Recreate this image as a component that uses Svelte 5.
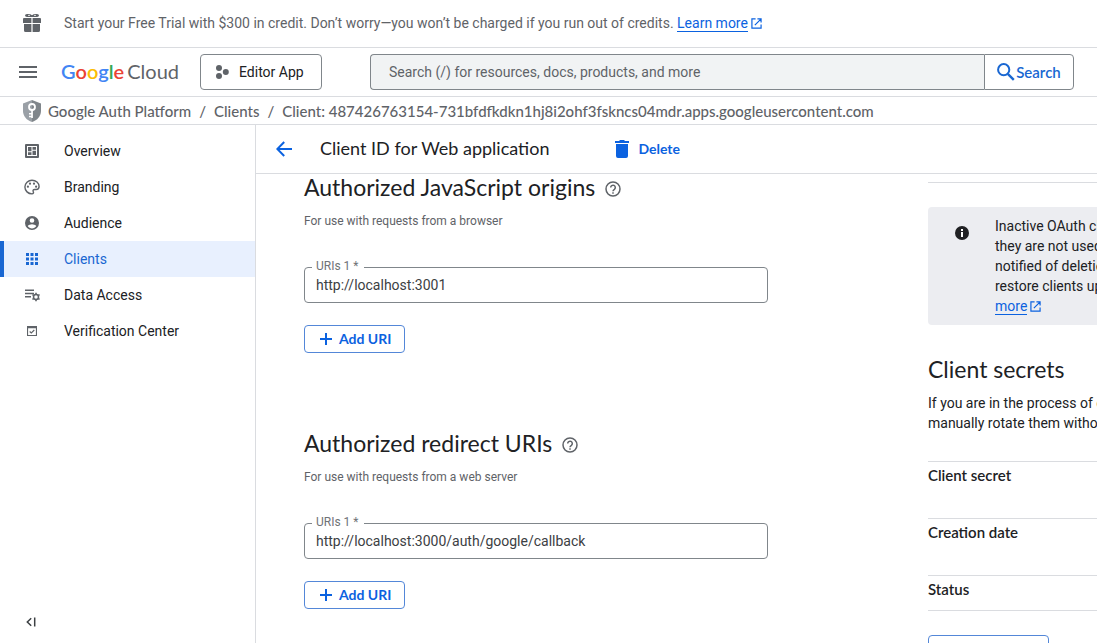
<script lang="ts">
  const nav = [
    { label: 'Overview', icon: 'overview' },
    { label: 'Branding', icon: 'palette' },
    { label: 'Audience', icon: 'person' },
    { label: 'Clients', icon: 'apps', active: true },
    { label: 'Data Access', icon: 'data' },
    { label: 'Verification Center', icon: 'verify' }
  ];
  const crumbs = [
    'Google Auth Platform',
    'Clients',
    'Client: 487426763154-731bfdfkdkn1hj8i2ohf3fskncs04mdr.apps.googleusercontent.com'
  ];
  const sections = $state([
    { id: 'origins', title: 'Authorized JavaScript origins', hint: 'For use with requests from a browser', uri: 'http://localhost:3001' },
    { id: 'redirects', title: 'Authorized redirect URIs', hint: 'For use with requests from a web server', uri: 'http://localhost:3000/auth/google/callback' }
  ]);
  const fields = ['Client secret', 'Creation date', 'Status'];
</script>

{#snippet external()}
  <svg class="external" width="11" height="11" viewBox="0 0 12 12" fill="none" stroke="currentColor" stroke-width="1.3" aria-hidden="true">
    <path d="M5 1H1v10h10V7M7 1h4v4M10.800 1.200 4.200 7.800" />
  </svg>
{/snippet}

{#snippet plus()}
  <svg width="12" height="12" viewBox="0 0 12 12" fill="none" stroke="currentColor" stroke-width="2" aria-hidden="true">
    <path d="M6 0v12M0 6h12" />
  </svg>
{/snippet}

<div class="page">
  <div class="banner">
    <svg width="18" height="18" viewBox="0 0 18 18" fill="#5f6368" aria-hidden="true">
      <path d="M2 1.600Q2 0 4 0h1.500Q7.500 0 9 1.200 10.500 0 12.500 0H14q2 0 2 1.600Q16 3 14 3H4Q2 3 2 1.600zM1 4h7.400v5H0V5q0-1 1-1zm8.600 0H17q1 0 1 1v4H9.600zM1 10h7.400v8H2.500Q1 18 1 16.500zm8.600 0H17v6.500q0 1.500-1.500 1.500H9.600z" />
      <path d="M5 1.400h2M11 1.400h2" stroke="#fff" stroke-width=".8" />
    </svg>
    <p>Start your Free Trial with $300 in credit. Don’t worry—you won’t be charged if you run out of credits. <a class="link" href="#trial"><span>Learn more</span>{@render external()}</a></p>
  </div>

  <header>
    <button class="plain menu" aria-label="Main menu">
      <svg width="18" height="12" viewBox="0 0 18 12" fill="#5f6368" aria-hidden="true"><path d="M0 0h18v2H0zM0 5h18v2H0zM0 10h18v2H0z" /></svg>
    </button>
    <a class="logo" href="#home"><span class="google"><i class="b">G</i><i class="r">o</i><i class="y">o</i><i class="b">g</i><i class="g">l</i><i class="r">e</i></span><span>Cloud</span></a>
    <button class="project">
      <svg width="14" height="14" viewBox="0 0 14 14" fill="#5f6368" aria-hidden="true"><circle cx="4" cy="3.100" r="3" /><circle cx="10.800" cy="7" r="3" /><circle cx="4" cy="10.900" r="3" /></svg>
      Editor App
    </button>
    <form class="search">
      <input type="search" aria-label="Search" placeholder="Search (/) for resources, docs, products, and more" />
      <button type="button">
        <svg width="18" height="18" viewBox="0 0 18 18" fill="none" stroke="currentColor" aria-hidden="true"><circle cx="6.700" cy="6.700" r="5.600" stroke-width="2" /><path d="m10.800 10.800 6 6" stroke-width="2.400" /></svg>
        Search
      </button>
    </form>
  </header>

  <nav class="crumbs" aria-label="Breadcrumb">
    <svg width="18" height="22" viewBox="0 0 18 22" aria-hidden="true">
      <path d="M9 0 0 3.500V11c0 5 3.700 9.500 9 11z" fill="#9aa0a6" />
      <path d="m9 0 9 3.500V11c0 5-3.700 9.500-9 11z" fill="#80868b" />
      <circle cx="9" cy="7" r="3" fill="none" stroke="#fff" stroke-width="1.800" />
      <path d="M8.200 10h1.700v8H8.200zM6 13h3v1.500H6zM6 15.800h3v1.500H6z" fill="#fff" />
    </svg>
    {#each crumbs as crumb, i}
      {#if i > 0}<span class="slash">/</span>{/if}
      <a href="#crumb-{i}">{crumb}</a>
    {/each}
  </nav>

  <div class="body">
    <aside>
      <nav aria-label="Google Auth Platform">
        {#each nav as item}
          <a class="item" class:active={item.active} href="#{item.icon}">
            <svg width="16" height="16" viewBox="0 0 16 16" fill="currentColor" aria-hidden="true">
              {#if item.icon === 'overview'}
                <path fill-rule="evenodd" d="M2 1h12q1 0 1 1v12q0 1-1 1H2q-1 0-1-1V2q0-1 1-1zm1 2v10h10V3z" />
                <path d="M4 4h3.500v4.300H4zM4 9.300h3.500V12H4zM8.500 4H12v2.700H8.500zM8.500 7.700H12V12H8.500z" />
              {:else if item.icon === 'palette'}
                <path d="M8 1.200C4.100 1.200.9 4.200.9 8s3.200 6.900 7.100 6.900c1.300 0 1.900-1.100 1.300-2.100-.700-1.200 0-2.300 1.200-2.300h1.700c1.700 0 2.900-1.200 2.900-2.900 0-3.700-3.200-6.400-7.100-6.400z" fill="none" stroke="currentColor" stroke-width="1.400" />
                <circle cx="3.900" cy="7.700" r="1.100" /><circle cx="6" cy="4.700" r="1.100" /><circle cx="10" cy="4.700" r="1.100" /><circle cx="12.100" cy="7.700" r="1.100" />
              {:else if item.icon === 'person'}
                <path fill-rule="evenodd" d="M8 1a7 7 0 1 0 0 14A7 7 0 0 0 8 1zm0 2.200a2.300 2.300 0 1 1 0 4.600 2.300 2.300 0 0 1 0-4.600zM3.700 11.100C4.500 9.900 6.500 9.200 8 9.200s3.500.700 4.300 1.900a5.100 5.100 0 0 1-8.600 0z" />
              {:else if item.icon === 'apps'}
                <path d="M2 2h3v3H2zM6.500 2h3v3h-3zM11 2h3v3h-3zM2 6.500h3v3H2zM6.500 6.500h3v3h-3zM11 6.500h3v3h-3zM2 11h3v3H2zM6.500 11h3v3h-3zM11 11h3v3h-3z" />
              {:else if item.icon === 'data'}
                <path d="M1 2.500h9V4H1zM1 5.800h9v1.400H1zM1 9h6v1.500H1z" />
                <circle cx="12" cy="10" r="2.500" fill="none" stroke="currentColor" stroke-width="1.500" />
                <path d="M11.200 5.800h1.600v1.500h-1.600zM11.200 12.700h1.600v1.500h-1.600zM8 8.200l.8-1.300 1.300.8-.8 1.300zM13.900 12.300l.8-1.300 1.300.8-.8 1.300zM8 11.800l.8 1.300 1.300-.8-.8-1.300zM13.900 7.700l.8 1.300 1.300-.8-.8-1.300z" />
              {:else}
                <path fill-rule="evenodd" d="M3 3h10v10H3zm1.100 2.200v6.700h7.800V5.200z" />
                <path d="m5.700 8.500 1.600 1.500 3-3" fill="none" stroke="currentColor" stroke-width="1.100" />
              {/if}
            </svg>
            {item.label}
          </a>
        {/each}
      </nav>
      <button class="plain collapse" aria-label="Collapse navigation">
        <svg width="10" height="10" viewBox="0 0 10 10" fill="none" stroke="#3c4043" stroke-width="1.500" aria-hidden="true"><path d="M5.200 1.200 1.300 5l3.900 3.800M8.700.5v9" /></svg>
      </button>
    </aside>

    <main>
      <div class="toolbar">
        <button class="plain back" aria-label="Back">
          <svg width="16" height="16" viewBox="0 0 16 16" fill="none" stroke="currentColor" stroke-width="2" aria-hidden="true"><path d="M16 8H1.500M8.200 1 1.300 8l6.900 7" /></svg>
        </button>
        <h1>Client ID for Web application</h1>
        <button class="plain delete">
          <svg width="14" height="18" viewBox="0 0 14 18" fill="currentColor" aria-hidden="true"><path d="M0 1h4l1-1h4l1 1h4v2H0zM1 4h12v12q0 2-2 2H3q-2 0-2-2z" /></svg>
          Delete
        </button>
      </div>

      <div class="content">
        <div class="left">
          {#each sections as s}
            <section>
              <h2>{s.title}
                <svg width="16" height="16" viewBox="0 0 16 16" fill="none" stroke="#5f6368" stroke-width="1.500" role="img" aria-label="Help"><circle cx="8" cy="8" r="7" /><path d="M5.700 6.500a2.300 2.300 0 1 1 3.700 1.800C8.500 8.900 8 9.300 8 10.200" /><path d="M8 11.200v1.500" /></svg>
              </h2>
              <p class="hint">{s.hint}</p>
              <div class="field">
                <label for={s.id}>URIs 1 *</label>
                <input id={s.id} type="text" bind:value={s.uri} />
              </div>
              <button class="outlined">{@render plus()}Add URI</button>
            </section>
          {/each}
        </div>

        <div class="right">
          <hr />
          <div class="notice">
            <svg width="14" height="14" viewBox="0 0 14 14" aria-hidden="true"><circle cx="7" cy="7" r="7" fill="#202124" /><path d="M6 3h2v2H6zM6 6h2v5H6z" fill="#fff" /></svg>
            <p>Inactive OAuth clients are subject to deletion if<br />they are not used for six months. You will be<br />notified of deletion by email and you can<br />restore clients up to 30 days after deletion.<br /><a class="link" href="#inactive"><span>more</span>{@render external()}</a></p>
          </div>
          <h2>Client secrets</h2>
          <p class="about">If you are in the process of changing client secrets, you can<br />manually rotate them without downtime.</p>
          <dl>
            {#each fields as f}<dt>{f}</dt>{/each}
          </dl>
          <button class="outlined secret">{@render plus()}Add secret</button>
        </div>
      </div>
    </main>
  </div>
</div>

<style>
  :global(body) { margin: 0; background: #fff; }
  .page {
    --sans: Roboto, sans-serif;
    --display: Lato, sans-serif;
    --line: #dadce0;
    display: flex; flex-direction: column; height: 100vh; overflow: hidden;
    font: 14px/20px var(--sans); color: #202124;
  }
  * { box-sizing: border-box; }
  p, h1, h2, dl { margin: 0; }
  button, input { font: inherit; }
  button { cursor: pointer; background: #fff; color: inherit; }
  a { color: inherit; text-decoration: none; }
  svg { flex: none; }
  .plain { border: 0; padding: 0; background: none; display: flex; align-items: center; }

  .banner { display: flex; align-items: center; gap: 23px; height: 48px; flex: none; padding: 0 23px 2px; border-bottom: 1px solid var(--line); color: #5f6368; white-space: nowrap; }
  .link { color: #0b62e0; }
  .link span { border-bottom: 1px solid currentColor; }
  .external { margin-left: 3px; vertical-align: -1px; }

  header { display: flex; align-items: center; height: 49px; flex: none; padding: 0 23px 0 19px; border-bottom: 1px solid var(--line); }
  .menu { margin-right: 24px; }
  .logo { display: flex; gap: 3px; padding-bottom: 2px; font: 20px/28px var(--display); color: #5f6368; width: 139px; white-space: nowrap; }
  .google { font-weight: 600; }
  .logo i { font-style: normal; }
  .b { color: #4285f4; } .r { color: #ea4335; } .y { color: #fbbc04; } .g { color: #34a853; }
  .project { display: flex; align-items: center; gap: 10px; height: 36px; width: 122px; padding: 0 14px; border: 1px solid #80868b; border-radius: 4px; white-space: nowrap; }
  .search { display: flex; flex: 1; min-width: 0; margin: 0 0 0 48px; height: 36px; }
  .search input { flex: 1; min-width: 0; border: 1px solid #80868b; border-right: 0; border-radius: 4px 0 0 4px; background: #f1f3f4; padding: 0 18px; color: #202124; }
  .search input::placeholder { color: #5f6368; opacity: 1; }
  .search button { display: flex; align-items: center; justify-content: center; gap: 1px; width: 90px; border: 1px solid #80868b; border-radius: 0 4px 4px 0; padding: 0; color: #1967d2; font: 600 15px/20px var(--display); }

  .crumbs { display: flex; align-items: center; height: 28px; flex: none; padding: 0 23px; border-bottom: 1px solid var(--line); color: #5f6368; font: 500 15px/20px var(--display); white-space: nowrap; }
  .crumbs svg { margin-right: 7px; }
  .slash { padding: 0 8px; }

  .body { display: flex; flex: 1; min-height: 0; }
  aside { display: flex; flex-direction: column; justify-content: space-between; width: 256px; flex: none; border-right: 1px solid var(--line); padding: 8px 0 16px; }
  .item { display: flex; align-items: center; gap: 24px; height: 36px; padding-left: 20px; border-left: 4px solid transparent; }
  .item svg { color: #5f6368; }
  .item.active { background: #e8f0fe; border-color: #1967d2; color: #1967d2; }
  .item.active svg { color: inherit; }
  .collapse { margin-left: 26px; width: 10px; }

  main { flex: 1; min-width: 0; display: flex; flex-direction: column; }
  .toolbar { display: flex; align-items: center; height: 49px; flex: none; padding-left: 20px; border-bottom: 1px solid var(--line); }
  .back { color: #0b62e0; margin-right: 28px; }
  h1 { font: 400 18px/24px var(--display); padding-bottom: 2px; margin-right: 66px; white-space: nowrap; }
  .delete { gap: 9px; color: #0b62e0; font: 700 14px/20px var(--display); }
  .content { display: grid; grid-template-columns: 464px 400px; gap: 160px; padding-left: 48px; flex: 1; min-height: 0; overflow: hidden; }
  h2 { display: flex; align-items: center; gap: 10px; font: 400 23px/26px var(--display); padding-bottom: 2px; white-space: nowrap; }
  h2 svg { margin-top: 3px; }
  section { height: 256px; }
  .hint { margin-top: 11px; font-size: 12px; line-height: 16px; color: #5f6368; }
  .field { position: relative; margin: 38px 0 22px; }
  .field label { position: absolute; left: 8px; top: -9px; padding: 0 5px 0 4px; background: #fff; font-size: 12px; line-height: 16px; color: #6f7377; }
  .field input { display: block; width: 100%; height: 36px; padding: 0 11px; border: 1px solid #80868b; border-radius: 4px; color: #3c4043; background: #fff; }
  .outlined { display: inline-flex; align-items: center; gap: 7px; height: 28px; padding: 0 13px 0 15px; border: 1px solid #5387d8; border-radius: 4px; color: #0b62e0; font: 700 14px/20px var(--display); }
  .secret { padding: 0 15px 0 18px; }

  hr { margin: 8px 0 24px; border: 0; border-top: 1px solid var(--line); }
  .notice { display: flex; gap: 26px; padding: 9px 27px; background: #ecedf1; border-radius: 4px; margin-bottom: 31px; white-space: nowrap; }
  .notice > svg { margin-top: 10px; }
  .about { margin: 9px 0 28px; white-space: nowrap; }
  dl { border-bottom: 1px solid var(--line); margin-bottom: 24px; }
  dt { height: 57px; border-top: 1px solid var(--line); padding-top: 3px; font: 600 15px/20px var(--display); }
  dt:last-child { height: 35px; }
</style>
